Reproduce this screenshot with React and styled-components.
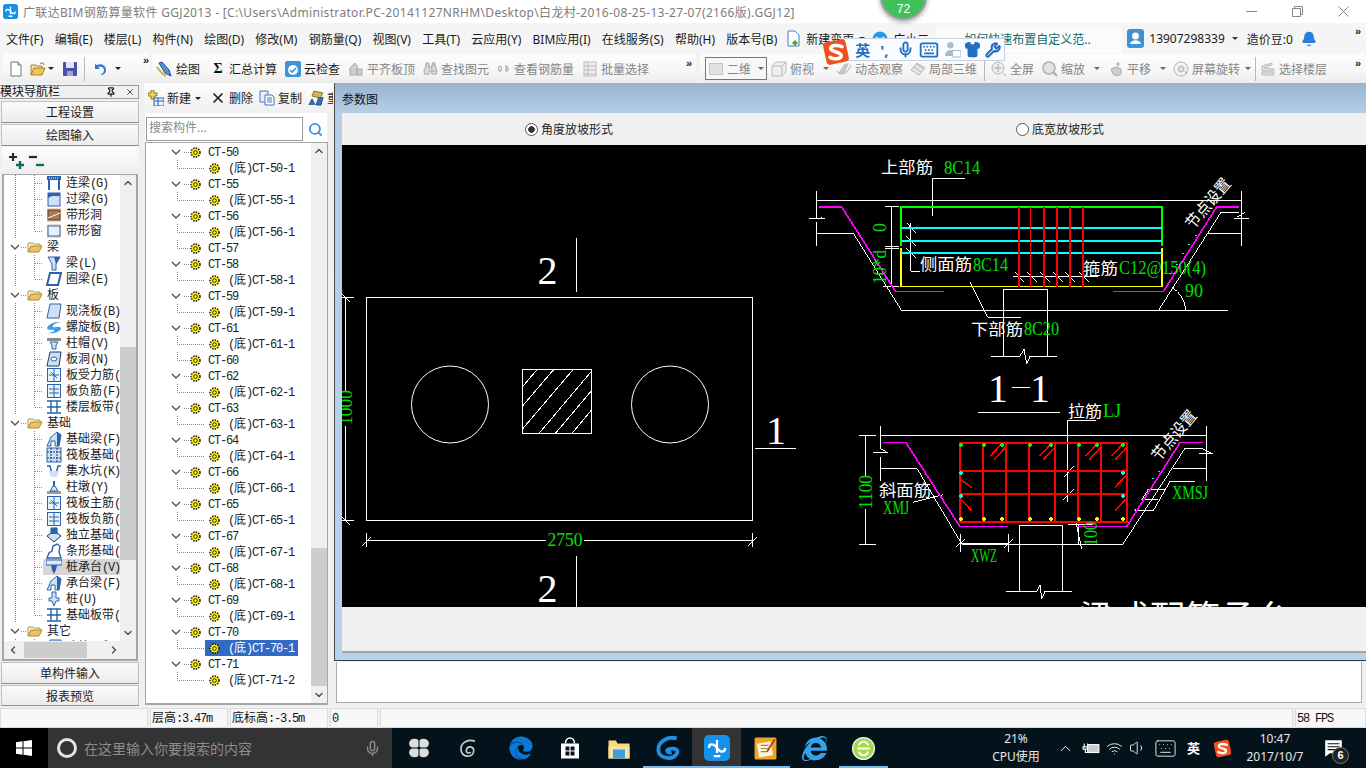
import React from "react";
import styled, { createGlobalStyle } from "styled-components";
import { FaEdge, FaInternetExplorer } from "react-icons/fa";
import { Binoculars, Mic, Search, Bell, Keyboard, Wrench, Shirt, Volume1, Wifi, ChevronUp, ChevronDown, ChevronLeft, ChevronRight, X, Pin } from "lucide-react";

const CJK = `"Noto Sans", "Noto Sans CJK SC", sans-serif`;

const GlobalStyle = createGlobalStyle`
  html, body { margin: 0; padding: 0; background: #f0f0f0; }
  * { box-sizing: border-box; }
  body { font-family: ${CJK}; font-size: 12px; color: #1c1c1c; }
`;

const Page = styled.div`
  position: relative;
  width: 1366px;
  height: 768px;
  overflow: hidden;
  display: flex;
  flex-direction: column;
  background: #f0f0f0;
`;

/* title bar */
const TitleBar = styled.div`
  height: 23px;
  background: #fff;
  display: flex;
  align-items: center;
  padding-left: 3px;
`;
const TitleText = styled.span`
  margin-left: 5px;
  font-size: 12px;
  color: #7d7d7d;
  white-space: nowrap;
  letter-spacing: 0.33px;
`;
const WinButtons = styled.div`
  margin-left: auto;
  display: flex;
  width: 138px;
  height: 23px;
`;
const WinButton = styled.div`
  width: 46px;
  display: flex;
  align-items: center;
  justify-content: center;
`;

/* menu */
const MenuBar = styled.div`
  height: 31px;
  background: #f5f5f5;
  display: flex;
  align-items: center;
  padding-left: 6px;
  white-space: nowrap;
`;
const MenuItem = styled.span`
  margin-right: ${(p) => p.$mr ?? 11.25}px;
  font-size: 12px;
  color: #1c1c1c;
`;
const NewsTab = styled.div`
  width: 186px;
  height: 26px;
  margin: 2px 5px 0 0;
  border-radius: 3px 3px 0 0;
  background: #fbfbfb;
  color: #0c6b6b;
  padding-left: 28px;
  line-height: 25px;
  font-size: 12px;
`;
const MenuIcon = styled.span`
  display: inline-flex;
  margin-right: ${(p) => p.$mr ?? 5}px;
`;
const Caret = styled.span`
  display: inline-block;
  width: 0;
  height: 0;
  border-left: 3px solid transparent;
  border-right: 3px solid transparent;
  border-top: 3px solid ${(p) => p.$c ?? "#333"};
  margin-left: ${(p) => p.$ml ?? 5}px;
  margin-right: ${(p) => p.$mr ?? 0}px;
`;
const More = styled.span`
  font: bold 11px "Liberation Sans", sans-serif;
  color: #222;
  align-self: flex-start;
  margin-top: ${(p) => p.$mt ?? 2}px;
  margin-left: ${(p) => p.$ml ?? 0}px;
`;
const FloatMore = styled(More)`
  position: absolute;
  top: 3px;
  left: ${(p) => p.$x}px;
  margin: 0;
`;

/* toolbars */
const ToolRow = styled.div`
  height: 29px;
  display: flex;
  background: #f2f2f2;
`;
const Band = styled.div`
  width: ${(p) => p.$w}px;
  margin-left: ${(p) => p.$ml ?? 0}px;
  padding-left: ${(p) => p.$pl ?? 4}px;
  display: flex;
  align-items: center;
  border-radius: 4px 4px 0 0;
  background: linear-gradient(#fdfdfd, #f6f6f6 60%, #ececec);
  white-space: nowrap;
  position: relative;
`;
const ToolBtn = styled.div`
  display: flex;
  align-items: center;
  gap: 3px;
  margin-left: ${(p) => p.$ml ?? 8}px;
  font-size: 12px;
  color: ${(p) => (p.$dim ? "#858585" : "#1c1c1c")};
`;
const ToolSep = styled.div`
  width: 1px;
  height: 24px;
  background: #b8b8b8;
  margin: 0 ${(p) => p.$r ?? 6}px 0 ${(p) => p.$l ?? 6}px;
`;
const Combo = styled.div`
  width: 62px;
  height: 23px;
  margin-left: 5px;
  border: 1px solid #777;
  background: #f7f7f7;
  display: flex;
  align-items: center;
  padding-left: 3px;
  color: #858585;
`;
const ComboSwatch = styled.span`
  width: 14px;
  height: 12px;
  margin-right: 4px;
  background: #e2e2e2;
  border: 1px solid #c6c6c6;
`;
const Sigma = styled.span`
  width: 16px;
  text-align: center;
  font: bold 14px "Liberation Serif", serif;
  color: #111;
`;

/* body */
const Body = styled.div`
  flex: 1;
  display: flex;
  min-height: 0;
`;
const LeftPanel = styled.div`
  width: 139px;
  padding: 2px 0 1px;
  display: flex;
  flex-direction: column;
`;
const NavHeader = styled.div`
  height: 14px;
  display: flex;
  align-items: center;
  border: 1px solid #9c9c9c;
  border-left: 0;
  font-size: 12px;
  line-height: 12px;
  color: #111;
  margin-bottom: 2px;
`;
const NavTool = styled.span`
  display: inline-flex;
  margin-left: ${(p) => p.$ml}px;
`;
const NavButton = styled.div`
  height: ${(p) => p.$h ?? 22}px;
  margin: 0 0 1px 1px;
  display: flex;
  align-items: center;
  justify-content: center;
  border: 1px solid #c0c0c0;
  border-bottom-color: #8e8e8e;
  background: linear-gradient(#fafafa, #ececec);
  font-size: 12px;
  color: #1c1c1c;
`;
const ExpandBar = styled.div`
  height: 27px;
  margin-left: 2px;
  display: flex;
  align-items: center;
  padding-left: 4px;
  background: linear-gradient(#fdfdfd, #eeeeee);
`;
const TreeFrame = styled.div`
  flex: 1;
  margin: 0 1px 1px 2px;
  border: 2px solid #a6a6a6;
  border-top-width: 1px;
  display: flex;
  flex-direction: column;
  background: #fff;
  min-height: 0;
`;
const TreeRowWrap = styled.div`
  flex: 1;
  display: flex;
  min-height: 0;
`;
const TreeList = styled.div`
  flex: 1;
  overflow: hidden;
  padding-top: ${(p) => p.$pt ?? 0}px;
`;
const TreeRow = styled.div`
  height: 16px;
  display: flex;
  align-items: center;
  white-space: nowrap;
  font-size: 12px;
  line-height: 16px;
  color: #1c1c1c;
`;
const LeafCell = styled.span`
  display: flex;
  align-items: center;
  height: 16px;
  padding-left: 3px;
  background: ${(p) => (p.$on ? "#d6d6d6" : "transparent")};
`;
const Guide = styled.svg`
  flex: none;
  display: block;
`;
const Mono = styled.span`
  font: 12px "Liberation Mono", monospace;
  letter-spacing: -1.2px;
`;
const TreeCode = styled(Mono)`
  padding-top: 1px;
`;
const RowIcon = styled.span`
  display: inline-flex;
  flex: none;
  margin-right: ${(p) => p.$mr ?? 4}px;
`;
const Clip = styled.span`
  width: ${(p) => p.$w}px;
  overflow: hidden;
  flex: none;
`;
const VScroll = styled.div`
  width: ${(p) => p.$w ?? 16}px;
  flex: none;
  background: #f0f0f0;
  display: flex;
  flex-direction: column;
`;
const ScrollEnd = styled.div`
  height: 16px;
  flex: none;
  display: flex;
  align-items: center;
  justify-content: center;
  color: #555;
`;
const ScrollGap = styled.div`
  height: ${(p) => p.$h}px;
  flex: ${(p) => (p.$h ? "none" : 1)};
`;
const ScrollThumb = styled.div`
  height: ${(p) => p.$h}px;
  flex: none;
  background: #cdcdcd;
`;
const HScroll = styled.div`
  height: 18px;
  flex: none;
  display: flex;
  align-items: center;
  padding-left: 3px;
  background: #f0f0f0;
  color: #555;
`;
const HThumb = styled.div`
  width: 63px;
  height: 16px;
  background: #cdcdcd;
  margin: 0 21px 0 5px;
`;

const MiddlePanel = styled.div`
  width: 189px;
  margin-left: 6px;
  display: flex;
  flex-direction: column;
`;
const MidTools = styled.div`
  height: 30px;
  width: 189px;
  margin-left: -1px;
  padding-left: 4px;
  display: flex;
  align-items: center;
  overflow: hidden;
  white-space: nowrap;
  background: linear-gradient(#fdfdfd, #efefef);
`;
const SearchRow = styled.div`
  height: 29px;
  width: 182px;
  padding-top: 4px;
  display: flex;
  background: #fff;
`;
const SearchBox = styled.div`
  width: 157px;
  height: 24px;
  margin-left: 1px;
  border: 1px solid #9a9a9a;
  padding-left: 2px;
  line-height: 20px;
  font-size: 12px;
  color: #8a8a8a;
  background: #fff;
`;
const SearchBtn = styled.div`
  flex: 1;
  display: flex;
  align-items: center;
  justify-content: center;
  color: #3d92dd;
`;
const MidFrame = styled.div`
  width: 183px;
  flex: 1;
  margin-bottom: 3px;
  border: 1px solid #a6a6a6;
  border-bottom-width: 2px;
  background: #fff;
  display: flex;
  min-height: 0;
`;
const Selected = styled.span`
  width: 93px;
  height: 16px;
  display: flex;
  align-items: center;
  padding-left: 4px;
  background: ${(p) => (p.$on ? "#316ac5" : "transparent")};
  color: ${(p) => (p.$on ? "#fff" : "#1c1c1c")};
`;

/* right */
const RightPanel = styled.div`
  flex: 1;
  display: flex;
  flex-direction: column;
  min-width: 0;
`;
const ParamWindow = styled.div`
  height: 578px;
  padding: 0 0 7px 7px;
  border-left: 1px solid #4a4a4a;
  border-bottom: 1px solid #2f3f3f;
  background: linear-gradient(#9ab4d0, #b6cee7 30px, #b5d2ee);
  display: flex;
  flex-direction: column;
`;
const ParamTitle = styled.div`
  height: 30px;
  padding-top: 9px;
  font-size: 12px;
  line-height: 16px;
  color: #111;
`;
const OptionBar = styled.div`
  height: 33px;
  display: flex;
  align-items: center;
  background: #f0f0f0;
  font-size: 12px;
`;
const RadioLabel = styled.label`
  display: flex;
  align-items: center;
  gap: 3px;
  margin-left: ${(p) => p.$ml}px;
`;
const RadioDot = styled.span`
  width: 13px;
  height: 13px;
  border-radius: 50%;
  border: 1px solid #555;
  background: ${(p) => (p.$on ? "radial-gradient(circle, #333 0 3px, #fff 3.6px)" : "#fff")};
`;
const Cad = styled.svg`
  display: block;
  width: 1024px;
  height: 462px;
  background: #000;
  flex: none;
`;
const ParamFoot = styled.div`
  height: 46px;
  background: #f0f0f0;
  border-bottom: 2px solid #a2a2a2;
`;
const NotePanel = styled.div`
  width: 1026px;
  height: 41px;
  margin: 1px 0 0 2px;
  background: #fff;
  border: 1px solid #adadad;
  border-top: 0;
`;

/* status + taskbar */
const StatusBar = styled.div`
  height: 20px;
  display: flex;
  gap: 2px;
  background: #f0f0f0;
`;
const StatusCell = styled.div`
  width: ${(p) => p.$w}px;
  background: #f7f7f7;
  border: 1px solid #dcdcdc;
  padding-left: 1px;
  line-height: 18px;
  font-size: 12px;
  color: #111;
  white-space: nowrap;
`;
const Taskbar = styled.div`
  height: 40px;
  display: flex;
  background: #04131b;
`;
const StartBtn = styled.div`
  width: 48px;
  background: #000;
  display: flex;
  align-items: center;
  justify-content: center;
`;
const SearchPill = styled.div`
  width: 344px;
  margin-right: 2px;
  background: #333;
  display: flex;
  align-items: center;
  padding-left: 9px;
  color: #8d8d8d;
  font-size: 14px;
`;
const CortanaRing = styled.span`
  width: 20px;
  height: 20px;
  border: 3px solid #e4e4e4;
  border-radius: 50%;
  margin-right: 7px;
`;
const MicSlot = styled.span`
  display: inline-flex;
  margin-left: 112px;
`;
const TaskIcon = styled.div`
  width: 49px;
  height: 40px;
  margin-left: ${(p) => p.$ml ?? 0}px;
  display: flex;
  align-items: center;
  justify-content: center;
  background: ${(p) => (p.$active ? "#333" : "transparent")};
  border-bottom: 2px solid ${(p) => (p.$open ? "#76b9ed" : "transparent")};
  padding-top: 2px;
`;
const Tray = styled.div`
  margin-left: auto;
  display: flex;
  color: #e8e8e8;
`;
const TrayCell = styled.div`
  width: ${(p) => p.$w}px;
  margin-left: ${(p) => p.$ml ?? 0}px;
  padding-right: ${(p) => p.$pr ?? 0}px;
  position: relative;
  display: flex;
  flex-direction: column;
  align-items: center;
  justify-content: center;
  font-size: 12px;
  line-height: 18px;
  white-space: nowrap;
`;
const ImeGlyph = styled.span`
  font-size: 13px;
  font-weight: 700;
  color: #fff;
`;
const NoteBadge = styled.span`
  position: absolute;
  left: 22px;
  top: 19px;
  width: 17px;
  height: 17px;
  border-radius: 50%;
  background: #222;
  border: 1px solid #777;
  color: #fff;
  font: bold 11px/15px "Liberation Sans", sans-serif;
  text-align: center;
`;

/* overlays */
const SpeedBall = styled.div`
  position: absolute;
  left: 880px;
  top: -27px;
  width: 47px;
  height: 47px;
  border-radius: 50%;
  background: #3fc15a;
  border: 2px solid #9d9d9d;
  box-shadow: 0 2px 5px rgba(0, 0, 0, 0.35);
  color: #fff;
  font: 12px "Liberation Sans", sans-serif;
  text-align: center;
  padding-top: 27px;
`;
const ImeBar = styled.div`
  position: absolute;
  left: 843px;
  top: 38px;
  width: 162px;
  height: 23px;
  background: #fafcff;
  border: 1px solid #c6d4e4;
  display: flex;
  align-items: center;
  color: #1e6fc4;
  padding-left: 9px;
`;
const ImeSlot = styled.span`
  width: ${(p) => p.$w ?? 22}px;
  display: flex;
  justify-content: center;
  font-size: 15px;
  font-weight: 700;
  color: ${(p) => p.$c ?? "#1e6fc4"};
`;
const ImeLogo = styled.div`
  position: absolute;
  left: 822px;
  top: 38px;
`;

/* mix of bitmap-like latin and cjk, the old app draws labels this way */
const mixed = (text) =>
  text.split(/([\x20-\x7e]+)/).map((part, i) =>
    /[\x20-\x7e]/.test(part) ? <Mono key={i}>{part}</Mono> : part
  );

/* drawings */
const Svg = ({ s = 16, w, h, children, vb }) => (
  <svg width={w ?? s} height={h ?? s} viewBox={vb ?? "0 0 16 16"} style={{ display: "block" }}>
    {children}
  </svg>
);

const BL = "#2a62b0", LB = "#cfe0f5", DK = "#17386e";
const treeArt = {
  lian: <><rect x="1" y="1" width="14" height="4" fill={BL} /><path d="M3 5v10M13 5v10" stroke={BL} strokeWidth="2" /><path d="M3 3h10" stroke="#fff" strokeDasharray="1 1" /></>,
  guo: <><rect x="2" y="2" width="12" height="13" fill={LB} stroke={BL} /><path d="M2 2h12v3H6l-4 2z" fill={BL} /></>,
  hole: <><rect x="1" y="1" width="14" height="14" fill="#f6d6c8" /><rect x="2" y="3" width="12" height="10" fill="#a6794f" stroke="#5f3b1b" /><path d="M2 11l12-5" stroke="#fff" /></>,
  win: <><rect x="1" y="1" width="14" height="14" fill="#f6d6c8" /><rect x="2" y="3" width="12" height="10" fill="#e8f0fb" stroke={BL} /></>,
  beam: <><path d="M2 2h12L10 9v6H6V9z" fill={LB} stroke={BL} /><path d="M8 2l6 0-4 7" fill={BL} /></>,
  ring: <><path d="M4 2h11l-3 12H1z" fill="#fff" stroke={BL} strokeWidth="2" /></>,
  slab: <><path d="M4 1h11l-2 14H1z" fill={LB} stroke={BL} /></>,
  spiral: <><path d="M1 9c3-6 10-6 14-6-6 1-9 3-8 5 2 1 7-1 8 1 0 4-8 6-14 5 4 0 8-2 7-3-2-1-6 1-7-2z" fill="#3d9be8" /></>,
  cap: <><rect x="1" y="3" width="14" height="3" fill="#8a8a8a" /><path d="M4 7h8l-2 3v4H6v-4z" fill={LB} stroke={BL} /></>,
  shole: <><path d="M4 1h11l-2 14H1z" fill={LB} stroke={DK} /><ellipse cx="8" cy="8" rx="3" ry="2" fill="#fff" stroke={BL} /></>,
  bar: <><rect x="1.5" y="1.5" width="13" height="13" fill="#eaf2fc" stroke={BL} /><path d="M8 2v12M3 8h10M5 5l6 6" stroke={BL} /></>,
  neg: <><rect x="1.5" y="1.5" width="13" height="13" fill="#eaf2fc" stroke={BL} /><path d="M8 2v12M3 6h10M3 10h10" stroke={BL} /></>,
  band: <><path d="M1 2h14M1 14h14M5 2v12M11 2v12M1 8h14" stroke={BL} strokeWidth="1.4" fill="none" /></>,
  fbeam: <><path d="M1 15l4-9 6-5 4 3-2 11H9v-5H5v5z" fill={LB} stroke={BL} /><path d="M11 1l4 3-2 11H11z" fill={BL} /></>,
  raft: <><rect x="1" y="1" width="14" height="14" fill={LB} stroke={BL} /><path d="M5 1v14M11 1v14M1 5h14M1 11h14" stroke={DK} strokeDasharray="2 1" /></>,
  pit: <><path d="M1 3h3l2 8h4l2-8h3" fill="none" stroke={BL} strokeWidth="1.5" /><path d="M3 8h10l-2 6H5z" fill={LB} /></>,
  pier: <><rect x="1" y="12" width="14" height="3" fill="#9a9a9a" /><path d="M4 12l3-5h2l3 5z" fill={LB} stroke={BL} /><rect x="7" y="2" width="2" height="5" fill={BL} /></>,
  ind: <><path d="M1 9l7 6 7-6-4-3V1H5v5z" fill={LB} stroke={DK} /><path d="M5 1h6v6H5z" fill={BL} /></>,
  strip: <><path d="M1 15l2-5 3-2 1-5 4-2 3 2-1 6 2 6z" fill="#fff" stroke={BL} strokeWidth="1.4" /></>,
  pile: <><rect x="0" y="1" width="16" height="5" fill="#dfe8f3" stroke={BL} /><path d="M5 6h6l-1 5-2 4-2-4z" fill={BL} /></>,
  zhuang: <><path d="M6 1h4v6h3v3h-3l-2 5-2-5H3V7h3z" fill={LB} stroke={BL} /></>,
};

const leftTree = [
  ["连梁(G)", "lian"], ["过梁(G)", "guo"], ["带形洞", "hole"], ["带形窗", "win", 1],
  ["梁"], ["梁(L)", "beam"], ["圈梁(E)", "ring", 1],
  ["板"], ["现浇板(B)", "slab"], ["螺旋板(B)", "spiral"], ["柱帽(V)", "cap"], ["板洞(N)", "shole"], ["板受力筋(", "bar"], ["板负筋(F)", "neg"], ["楼层板带(", "band", 1],
  ["基础"], ["基础梁(F)", "fbeam"], ["筏板基础(", "raft"], ["集水坑(K)", "pit"], ["柱墩(Y)", "pier"], ["筏板主筋(", "bar"], ["筏板负筋(", "neg"], ["独立基础(", "ind"], ["条形基础(", "strip"], ["桩承台(V)", "pile", 0, 1], ["承台梁(F)", "fbeam"], ["桩(U)", "zhuang"], ["基础板带(", "band", 1],
  ["其它"], ["建筑面积", "slab"],
];

const Dots = ({ d }) => <path d={d} stroke="#8a8a8a" strokeDasharray="1 1" fill="none" />;
const Chevron = ({ x }) => <path d={`M${x - 4} 6l4 4 4-4`} stroke="#555" strokeWidth="1.4" fill="none" />;

const Folder = () => (
  <Svg s={16}>
    <path d="M1 13V4h5l1 1h6v2" fill="#fff3c9" stroke="#a99a6a" />
    <path d="M1 13l3-6h11l-3 6z" fill="#f2c25a" stroke="#b08a2e" />
  </Svg>
);

const LeftTreeRow = ({ label, icon, last, on }) =>
  icon ? (
    <TreeRow>
      <Guide width="39" height="16" viewBox="4 0 39 16">
        <Dots d="M15.5 0v16" />
        <Dots d={`M34.5 0v${last ? 8.5 : 16}M35 8.5h8`} />
      </Guide>
      <LeafCell $on={on}>
        <RowIcon $mr={4}><Svg>{treeArt[icon]}</Svg></RowIcon>
        <Clip $w={54}>{mixed(label)}</Clip>
      </LeafCell>
    </TreeRow>
  ) : (
    <TreeRow>
      <Guide width="23" height="16" viewBox="4 0 23 16">
        <Chevron x={15} />
        <Dots d="M21 8.5h5" />
      </Guide>
      <RowIcon $mr={4}><Folder /></RowIcon>
      {label}
    </TreeRow>
  );

const Gear = () => (
  <svg width="11" height="11" viewBox="0 0 11 11" style={{ display: "block" }}>
    <circle cx="5.5" cy="5.5" r="4.5" fill="#ffee00" stroke="#1a1a1a" strokeWidth="1.5" strokeDasharray="1.5 1.1" />
    <circle cx="5.5" cy="5.5" r="1.8" fill="#ffff40" stroke="#222" strokeWidth="1" />
  </svg>
);

const ct = [
  ["50", "1"], ["55", "1"], ["56", "1"], ["57"], ["58", "1"], ["59", "1"], ["61", "1"], ["60"], ["62", "1"], ["63", "1"],
  ["64", "1"], ["66", "1"], ["65", "1"], ["67", "1"], ["68", "1"], ["69", "1"], ["70", "1"], ["71", "2"],
];

const MidGroup = ({ id, child }) => (
  <>
    <TreeRow>
      <Guide width="44" height="16" viewBox="146 0 44 16">
        {child ? <Chevron x={176} /> : <Dots d="M177.5 0v8.5h12" />}
        {child && <Dots d="M184 8.5h5" />}
      </Guide>
      <RowIcon $mr={7}><Gear /></RowIcon>
      <TreeCode>CT-{id}</TreeCode>
    </TreeRow>
    {child && (
      <TreeRow>
        <Guide width="59" height="16" viewBox="146 0 59 16">
          <Dots d="M177.5 0v8.5h27.5" />
        </Guide>
        <Selected $on={id === "70"}>
          <RowIcon $mr={8}><Gear /></RowIcon>
          <span>{mixed(`(底)CT-${id}-${child}`)}</span>
        </Selected>
      </TreeRow>
    )}
  </>
);

const ic = {
  doc: <Svg><path d="M3 1h7l3 3v11H3z" fill="#fff" stroke="#777" /><path d="M10 1v3h3" fill="#ddd" stroke="#777" /></Svg>,
  open: <Svg><path d="M1 14V4h5l1 1h5v2" fill="#f7e3a8" stroke="#a5822f" /><path d="M1 14l3-7h11l-3 7z" fill="#eec25d" stroke="#a5822f" /><path d="M10 3c2-2 4-1 4 1" fill="none" stroke="#3b7d2e" /></Svg>,
  save: <Svg><rect x="1" y="1" width="14" height="14" rx="1" fill="#4a4fa8" /><rect x="4" y="1" width="8" height="6" fill="#dfe4f4" /><rect x="5" y="10" width="6" height="5" fill="#9ea6cf" /></Svg>,
  undo: <Svg><path d="M3 3v5h5L6 6c3-1 6 0 6 3s-2 4-4 5c4 0 6-2 6-5 0-4-4-7-9-5z" fill="#3478c8" /></Svg>,
  draw: <Svg w={17} h={16} vb="0 0 17 16"><path d="M3 2l3-1 7 8 2 6-6-3z" fill="#5b8fd6" stroke="#1f4b8e" /><path d="M1 6c2 3 5 7 9 9" stroke="#c9b04a" strokeWidth="2" fill="none" /></Svg>,
  cloud: <Svg><rect x="0" y="0" width="16" height="16" rx="2" fill="#3a93dd" /><circle cx="8" cy="9" r="5" fill="#fff" /><path d="M5 9l2 2 4-4" stroke="#3a93dd" strokeWidth="1.6" fill="none" /></Svg>,
  grey1: <Svg><path d="M2 14V7l5-5 2 3v9zM9 14V8h5v6z" fill="#cfcfcf" stroke="#a8a8a8" /></Svg>,
  find: <Binoculars size={15} color="#b5b5b5" fill="#ddd" />,
  see: <Svg w={14} h={16} vb="0 0 14 16"><path d="M3 5c-2 1-2 5 0 5s2-4 0-5zM9 4v6c3 0 3-4 0-4" stroke="#b0b0b0" strokeWidth="1.3" fill="none" /></Svg>,
  batch: <Svg><rect x="2" y="1" width="12" height="14" fill="#eee" stroke="#bdbdbd" /><path d="M2 5h12M2 9h12M2 13h12M6 1v14" stroke="#bdbdbd" /></Svg>,
  cube: <Svg><path d="M1 5l4-4h10v10l-4 4H1zM1 5h10v10M11 5l4-4" fill="#eeeeee" stroke="#bdbdbd" /></Svg>,
  orbit: <Svg><path d="M2 13l6-10 5-1-4 10z" fill="#c8c8c8" /><path d="M1 10c3 5 10 4 14-6" stroke="#a9a9a9" fill="none" /></Svg>,
  local: <Svg><path d="M1 9l6-7 8 5-6 7z" fill="#e6e6e6" stroke="#b5b5b5" /><path d="M4 6l7 5M7 3l6 5" stroke="#b5b5b5" /></Svg>,
  full: <Svg><circle cx="7" cy="7" r="6" fill="#efefef" stroke="#b5b5b5" /><path d="M7 3v8M3 7h8M12 12l3 3" stroke="#a8a8a8" /></Svg>,
  zoom: <Svg><circle cx="7" cy="7" r="6" fill="#e4e4e4" stroke="#bcbcbc" strokeWidth="2" /><path d="M11 11l4 4" stroke="#a8a8a8" strokeWidth="2" /></Svg>,
  pan: <Svg><path d="M3 8l5-2 5 2v5l-4 2-4-2z" fill="#cfcfcf" stroke="#aaa" /><path d="M10 1v5M8 3h4" stroke="#aaa" /></Svg>,
  rotate: <Svg><circle cx="8" cy="8" r="7" fill="#f2f2f2" stroke="#b3b3b3" /><circle cx="8" cy="8" r="3" fill="#dcdcdc" stroke="#b3b3b3" /><path d="M12 10l2 3" stroke="#999" /></Svg>,
  floors: <Svg><path d="M2 5l10-3v2L4 7l10 1v2H2zM2 11h12v3H2z" fill="#dedede" stroke="#bcbcbc" /></Svg>,
  newbuild: <Svg><path d="M3 0h3v3h3v3H6v3H3V6H0V3h3z" fill="#f4d35e" stroke="#8a7a2a" /><rect x="6" y="8" width="10" height="8" fill="#eaf2fc" stroke={BL} /><path d="M6 11h10M10 8v8" stroke={BL} /></Svg>,
  copy: <Svg><path d="M1 1h8v11H1z" fill="#e6eef9" stroke="#4a73b3" /><path d="M6 5h7l2 2v8H6z" fill="#fff" stroke="#4a73b3" /><path d="M8 8h5M8 10h5M8 12h5" stroke="#4a73b3" /></Svg>,
  rename: <Svg><path d="M6 1l9 2-3 5-8-2z" fill="#d8b24e" stroke="#8a7a2a" /><path d="M1 15l3-6 3 6M11 7l-3 8h5l2-8" fill="#3a6cc0" stroke="#1f4b8e" /></Svg>,
  plusTree: <Svg w={20} h={20} vb="0 0 20 20"><path d="M3 6h8M7 2v8" stroke="#17302c" strokeWidth="2.2" fill="none" /><path d="M10 14h8M14 10v8" stroke="#0d6b5f" strokeWidth="2.4" fill="none" /></Svg>,
  minusTree: <Svg w={20} h={20} vb="0 0 20 20"><path d="M3 6h8" stroke="#17302c" strokeWidth="2.2" /><path d="M10 14h8" stroke="#0d6b5f" strokeWidth="2.4" /></Svg>,
  biaoge: <Svg w={13} h={17} vb="0 0 13 17"><path d="M1 1h7l4 4v11H1z" fill="#fff" stroke="#3a7fd0" /><path d="M5 13l3-3 3 3-3 3z" fill="#57a52a" /></Svg>,
  xiao: <Svg><circle cx="8" cy="8" r="7.5" fill="#2a9be8" /><circle cx="5" cy="8" r="2" fill="#fff" /><circle cx="11" cy="8" r="2" fill="#fff" /></Svg>,
  user: <Svg w={17} h={19} vb="0 0 17 19"><rect width="17" height="19" rx="3" fill="#3f93d2" /><circle cx="8.5" cy="7" r="3.4" fill="#fff" /><path d="M3 15c1-5 10-5 11 0z" fill="#fff" /></Svg>,
};

const band2 = [
  { i: ic.draw, t: "绘图", ml: 0 },
  { i: <Sigma>Σ</Sigma>, t: "汇总计算", ml: 10 },
  { i: ic.cloud, t: "云检查" },
  { i: ic.grey1, t: "平齐板顶", dim: 1 },
  { i: ic.find, t: "查找图元", dim: 1 },
  { i: ic.see, t: "查看钢筋量", dim: 1 },
  { i: ic.batch, t: "批量选择", dim: 1 },
];

const AppIcon = () => (
  <Svg s={15}>
    <rect width="16" height="16" rx="3" fill="#1591ea" />
    <path d="M8 3v8M3 8c0-3 3-3 5 0s5 3 5 0M6 13h4" stroke="#fff" strokeWidth="1.5" fill="none" />
  </Svg>
);

/* CAD drawing, coordinates are the page's own */
const Sec = ({ x, y, s, children, fill = "#fff", family = "Liberation Serif", anchor = "start", rot, w }) => (
  <text
    x={x}
    y={y}
    fontSize={s}
    fill={fill}
    fontFamily={`"${family}", "Noto Sans CJK SC", serif`}
    textAnchor={anchor}
    textLength={w}
    lengthAdjust={w ? "spacingAndGlyphs" : undefined}
    transform={rot ? `rotate(${rot} ${x} ${y})` : undefined}
  >
    {children}
  </text>
);
const Han = (p) => <Sec {...p} family="Noto Sans CJK SC" s={p.s ?? 16} />;
const G = (p) => <Sec fill="#00e000" s={18.5} {...p} />;

const topWhite =
  "M50 125V208M50 218V290M50 253H160L305 485H1285M1075 485L1263 190H1317M1225 253H1325M1325 125V290M50 155H1325" +
  "M28 210H75L62 205M1303 208H1348M1310 205L1335 190M255 174H297M255 292H297M250 413H297M255 298H297M275 174V413" +
  "M397 200V90H495M320 222L348 252M320 262L348 290M320 298L348 328M333 222V367H360" +
  "M640 382H895M643 368L672 398M680 368L710 398M718 368L748 398M757 368L787 398M795 368L825 398M835 368L865 398" +
  "M510 400L563 505H663M610 620V421H743V620M573 622H660L672 600L680 645L690 622H770" +
  "M1115 415A82 82 0 0 1 1157 485";
const botWhite =
  "M122 142V210M122 235V305M122 170H1100M1100 142V305M122 270H232L367 498H847L1035 208H1090M1000 270H1100" +
  "M100 222H145L122 210M1076 225H1120L1090 210" +
  "M78 170V290M78 390V498M57 170H108M57 498H108M415 100H660M682 124H768M682 124V370M670 295L702 262M670 362L702 330" +
  "M218 370L310 347M362 493H505M362 465V520M505 465V520M347 505L375 480M493 505L520 480" +
  "M1065 307H990L940 395H885M975 332H925L905 362H955M683 438H760M717 438V498M708 430L725 510" +
  "M538 637V440H668V637M498 637H590L600 618L605 660L615 637H695";
const pts = (xs, y) => xs.map((x) => `M${x - 6} ${y}h12M${x} ${y - 6}v12`).join("");
const barsX = [364, 433, 487, 571, 634, 718, 772, 850];

const CadDrawing = () => (
  <Cad viewBox="342 146 1024 462">
    <g fill="none" stroke="#fff" strokeWidth="1" shapeRendering="crispEdges">
      <rect x="366.5" y="298.5" width="386" height="223" />
      <rect x="522.5" y="370.5" width="69" height="64" />
      <path d="M522.5 387.7L536.7 371M522.5 407L553.3 371M522.5 430L572.7 371M539.3 434L591.5 372.3M555.7 434L591.5 391.7M572.3 434L591.5 411" />
      <path d="M576.5 239V293M576.5 557V608M755 449.5H796" />
      <path d="M345.5 298V392M345.5 427V522M342 298.5H354M342 521.5H354M342 295L350 303M342 518L350 526" />
      <path d="M366 541.5H546M584 541.5H752M366.5 534V548M752.5 534V548M362 547L371 538M748 547L757 538" />
    </g>
    <circle cx="450" cy="405.5" r="38.5" fill="none" stroke="#fff" />
    <circle cx="670" cy="405.5" r="38.5" fill="none" stroke="#fff" />
    <Sec x={547.5} y={285} s={40} anchor="middle">2</Sec>
    <Sec x={547.5} y={603} s={40} anchor="middle">2</Sec>
    <Sec x={776} y={445} s={40} anchor="middle">1</Sec>
    <G x={565} y={547} anchor="middle" w={35}>2750</G>
    <G x={352} y={426} rot={-90} w={35}>1000</G>

    <g transform="translate(800 150) scale(.33333)" fill="none" shapeRendering="crispEdges">
      <path d={topWhite} stroke="#fff" strokeWidth="3" />
      <path d="M57 174H125L287 428H432M940 428H1090L1250 174H1318" stroke="#f0f" strokeWidth="5" />
      <path d="M303 290V174H1087V290" stroke="#0f0" strokeWidth="5" />
      <path d="M303 298V413H1087V298" stroke="#ff0" strokeWidth="5" />
      <path d="M303 237H1087M303 276H1087M303 312H1087" stroke="#0ff" strokeWidth="5" />
      <path d="M657 174V413M692 174V413M732 174V413M771 174V413M810 174V413M849 174V413" stroke="#f00" strokeWidth="5" />
      <path d="M1107 375h6M1127 348h6M1147 313h6M1165 287h6M1184 259h6" stroke="#0ff" strokeWidth="3" />
    </g>
    <Han x={881} y={174} w={52}>上部筋</Han>
    <G x={944} y={175} w={36}>8C14</G>
    <Han x={920} y={271} w={52}>侧面筋</Han>
    <G x={973} y={272} w={35}>8C14</G>
    <Han x={1083} y={275} w={35}>箍筋</Han>
    <G x={1119} y={275} w={87}>C12@150(4)</G>
    <Han x={971} y={336} w={52}>下部筋</Han>
    <G x={1024} y={336} w={35}>8C20</G>
    <G x={1185} y={298} s={18}>90</G>
    <G x={886} y={233} rot={-90} s={18}>0</G>
    <G x={886} y={285} rot={-90} w={34} s={18}>10*d</G>
    <Han x={1193} y={231} rot={-50} w={60}>节点设置</Han>
    <Sec x={998} y={403} s={40} anchor="middle">1</Sec>
    <Sec x={1021} y={393} s={18} anchor="middle">—</Sec>
    <Sec x={1040} y={403} s={40} anchor="middle">1</Sec>

    <g transform="translate(840 380) scale(.33333)" fill="none" shapeRendering="crispEdges">
      <path d={botWhite} stroke="#fff" strokeWidth="3" />
      <path d="M130 191H198L360 443H503M712 443H860L1020 191H1090" stroke="#f0f" strokeWidth="5" />
      <path d="M360 191H860V428H360zM428 191V428M497 191V428M566 191V428M645 191V428M713 191V428M782 191V428M360 275H860M360 345H860" stroke="#f00" strokeWidth="6" />
      <path d="M450 232L482 198M462 242L497 205M598 232L630 198M610 242L645 205M736 232L768 198M748 242L782 205M814 232L846 198M826 242L860 205M362 302L395 325M362 360L395 395M825 325L858 290M825 395L858 360" stroke="#f00" strokeWidth="5" />
      <path d={pts(barsX, 199)} stroke="#0f0" strokeWidth="6" />
      <path d={pts(barsX, 421)} stroke="#ff0" strokeWidth="6" />
      <path d={pts([364, 850], 283) + pts([364, 850], 352)} stroke="#0ff" strokeWidth="6" />
      <path d="M955 277h6M937 300h6M922 332h6M902 362h6M882 392h6" stroke="#0ff" strokeWidth="3" />
    </g>
    <Han x={1068} y={418} w={34}>拉筋</Han>
    <G x={1103} y={418} w={18}>LJ</G>
    <Han x={879} y={497} w={52}>斜面筋</Han>
    <G x={883} y={515} w={26}>XMJ</G>
    <G x={971} y={563} w={26}>XWZ</G>
    <G x={1172} y={500} w={36}>XMSJ</G>
    <G x={872} y={510} rot={-90} w={34}>1100</G>
    <G x={1097} y={547} rot={-90} w={24}>100</G>
    <Han x={1159} y={463} rot={-50} w={60}>节点设置</Han>
    <Han x={1079} y={632} s={35} w={212}>梁式配筋承台</Han>
  </Cad>
);

const SogouLogo = ({ s = 28 }) => (
  <Svg s={s}>
    <rect x="1.5" y="1.5" width="13" height="13" rx="2" fill="#f0511c" transform="rotate(-12 8 8)" />
    <path d="M11.5 5C9 3.8 5 4 5 6s6 1.8 6 4-4.5 2.4-6.5 1" fill="none" stroke="#fff" strokeWidth="2" strokeLinecap="round" />
  </Svg>
);

const App = () => (
  <Page>
    <GlobalStyle />
    <TitleBar>
      <AppIcon />
      <TitleText>广联达BIM钢筋算量软件 GGJ2013 - [C:\Users\Administrator.PC-20141127NRHM\Desktop\白龙村-2016-08-25-13-27-07(2166版).GGJ12]</TitleText>
      <WinButtons>
        <WinButton><Svg s={11} vb="0 0 11 11"><path d="M0 5.5h11" stroke="#888" /></Svg></WinButton>
        <WinButton><Svg s={11} vb="0 0 11 11"><path d="M.5 2.5h8v8h-8zM2.5 2.5v-2h8v8h-2" fill="none" stroke="#888" /></Svg></WinButton>
        <WinButton><Svg s={11} vb="0 0 11 11"><path d="M.5.5l10 10M10.5.5l-10 10" stroke="#888" /></Svg></WinButton>
      </WinButtons>
    </TitleBar>

    <MenuBar>
      {["文件(F)", "编辑(E)", "楼层(L)", "构件(N)", "绘图(D)", "修改(M)", "钢筋量(Q)", "视图(V)", "工具(T)", "云应用(Y)", "BIM应用(I)", "在线服务(S)", "帮助(H)"].map((m) => (
        <MenuItem key={m}>{m}</MenuItem>
      ))}
      <MenuItem $mr={10}>版本号(B)</MenuItem>
      <MenuIcon $mr={6}>{ic.biaoge}</MenuIcon>
      <MenuItem $mr={0}>新建变更</MenuItem>
      <Caret $ml={5} $mr={7} />
      <MenuIcon $mr={5}>{ic.xiao}</MenuIcon>
      <MenuItem $mr={7}>广小二</MenuItem>
      <NewsTab>如何快速布置自定义范..</NewsTab>
      <MenuIcon>{ic.user}</MenuIcon>
      <MenuItem $mr={0}>13907298339</MenuItem>
      <Caret $ml={7} $mr={9} />
      <MenuItem $mr={8}>造价豆:0</MenuItem>
      <Bell size={16} color="#2a7fdc" fill="#2a7fdc" />
      <More $ml={38}>»</More>
    </MenuBar>

    <ToolRow>
      <Band $w={148} $pl={6} $ml={2}>
        <ToolBtn $ml={0}>{ic.doc}</ToolBtn>
        <ToolBtn $ml={6}>{ic.open}</ToolBtn>
        <Caret $ml={2} $c="#222" />
        <ToolBtn $ml={8}>{ic.save}</ToolBtn>
        <ToolSep $l={6} $r={7} />
        <ToolBtn $ml={0}>{ic.undo}</ToolBtn>
        <Caret $ml={7} $c="#222" />
        <More $mt={0} $ml={22}>»</More>
      </Band>
      <Band $w={544} $ml={2}>
        {band2.map((b) => (
          <ToolBtn key={b.t} $ml={b.ml} $dim={b.dim}>{b.i}{b.t}</ToolBtn>
        ))}
        <FloatMore $x={534}>»</FloatMore>
      </Band>
      <Band $w={666} $ml={4} $pl={0}>
        <Combo><ComboSwatch />二维<Caret $ml={7} $c="#666" /></Combo>
        <ToolBtn $ml={4} $dim>{ic.cube}俯视<Caret $ml={6} $c="#666" /></ToolBtn>
        <ToolBtn $ml={7} $dim>{ic.orbit}动态观察</ToolBtn>
        <ToolBtn $ml={7} $dim>{ic.local}局部三维</ToolBtn>
        <ToolSep $l={7} $r={6} />
        <ToolBtn $ml={0} $dim>{ic.full}全屏</ToolBtn>
        <ToolBtn $ml={8} $dim>{ic.zoom}缩放<Caret $ml={6} $c="#666" /></ToolBtn>
        <ToolBtn $ml={8} $dim>{ic.pan}平移<Caret $ml={6} $c="#666" /></ToolBtn>
        <ToolBtn $ml={7} $dim>{ic.rotate}屏幕旋转<Caret $ml={2} $c="#666" /></ToolBtn>
        <ToolSep $l={4} $r={4} />
        <ToolBtn $ml={0} $dim>{ic.floors}选择楼层</ToolBtn>
        <FloatMore $x={655}>»</FloatMore>
      </Band>
    </ToolRow>

    <Body>
      <LeftPanel>
        <NavHeader>
          模块导航栏
          <NavTool $ml={46}><Pin size={10} color="#222" strokeWidth={3} /></NavTool>
          <NavTool $ml={9}><X size={10} color="#333" /></NavTool>
        </NavHeader>
        <NavButton>工程设置</NavButton>
        <NavButton $h={22}>绘图输入</NavButton>
        <ExpandBar>{ic.plusTree}{ic.minusTree}</ExpandBar>
        <TreeFrame>
          <TreeRowWrap>
            <TreeList>
              {leftTree.map(([label, icon, last, on]) => (
                <LeftTreeRow key={label} label={label} icon={icon} last={last} on={on} />
              ))}
            </TreeList>
            <VScroll>
              <ScrollEnd><ChevronUp size={12} strokeWidth={3} /></ScrollEnd>
              <ScrollGap $h={156} />
              <ScrollThumb $h={213} />
              <ScrollGap />
              <ScrollEnd><ChevronDown size={12} strokeWidth={3} /></ScrollEnd>
            </VScroll>
          </TreeRowWrap>
          <HScroll>
            <ChevronLeft size={12} strokeWidth={3} />
            <HThumb />
            <ChevronRight size={12} strokeWidth={3} />
          </HScroll>
        </TreeFrame>
        <NavButton>单构件输入</NavButton>
        <NavButton $h={21}>报表预览</NavButton>
      </LeftPanel>

      <MiddlePanel>
        <MidTools>
          <ToolBtn $ml={0}>{ic.newbuild}新建<Caret $ml={1} $c="#222" /></ToolBtn>
          <ToolBtn $ml={9}><X size={16} color="#222" strokeWidth={2.6} /></ToolBtn>
          <ToolBtn $ml={3}>删除</ToolBtn>
          <ToolBtn $ml={6}>{ic.copy}复制</ToolBtn>
          <ToolBtn $ml={6}>{ic.rename}重</ToolBtn>
        </MidTools>
        <SearchRow>
          <SearchBox>搜索构件...</SearchBox>
          <SearchBtn><Search size={15} strokeWidth={3} /></SearchBtn>
        </SearchRow>
        <MidFrame>
          <TreeList $pt={1}>
            {ct.map(([id, child]) => <MidGroup key={id} id={id} child={child} />)}
          </TreeList>
          <VScroll>
            <ScrollEnd><ChevronUp size={12} strokeWidth={3} /></ScrollEnd>
            <ScrollGap $h={389} />
            <ScrollThumb $h={138} />
            <ScrollGap />
            <ScrollEnd><ChevronDown size={12} strokeWidth={3} /></ScrollEnd>
          </VScroll>
        </MidFrame>
      </MiddlePanel>

      <RightPanel>
        <ParamWindow>
          <ParamTitle>参数图</ParamTitle>
          <OptionBar>
            <RadioLabel $ml={183}><RadioDot $on />角度放坡形式</RadioLabel>
            <RadioLabel $ml={403}><RadioDot />底宽放坡形式</RadioLabel>
          </OptionBar>
          <CadDrawing />
          <ParamFoot />
        </ParamWindow>
        <NotePanel />
      </RightPanel>
    </Body>

    <StatusBar>
      <StatusCell $w={148} />
      <StatusCell $w={78}>{mixed("层高:3.47m")}</StatusCell>
      <StatusCell $w={98}>{mixed("底标高:-3.5m")}</StatusCell>
      <StatusCell $w={48}>{mixed("0")}</StatusCell>
      <StatusCell $w={913} />
      <StatusCell $w={71}>{mixed("58 FPS")}</StatusCell>
    </StatusBar>

    <Taskbar>
      <StartBtn>
        <Svg s={16}><path d="M0 2.2L6.5 1.3V7.5H0zM7.5 1.2L16 0V7.5H7.5zM0 8.5H6.5V14.7L0 13.8zM7.5 8.5H16V16L7.5 14.8z" fill="#fff" /></Svg>
      </StartBtn>
      <SearchPill>
        <CortanaRing />
        在这里输入你要搜索的内容
        <MicSlot><Mic size={17} color="#8d8d8d" /></MicSlot>
      </SearchPill>
      <TaskIcon>
        <Svg s={24}>
          <g fill="#ddd"><ellipse cx="5" cy="5" rx="3.6" ry="3.2" /><ellipse cx="11" cy="5" rx="3.6" ry="3.2" /><ellipse cx="5" cy="11" rx="3.6" ry="3.2" /><ellipse cx="11" cy="11" rx="3.6" ry="3.2" /></g>
          <path d="M8 1v14M1 8h14" stroke="#04131b" strokeWidth=".7" />
        </Svg>
      </TaskIcon>
      <TaskIcon>
        <Svg s={22}><path d="M13 3C7 1 2 5 3 10s8 5 9 1-4-5-5-2 2 3 3 2" fill="none" stroke="#ccc" strokeWidth="1.2" /></Svg>
      </TaskIcon>
      <TaskIcon $ml={4}><FaEdge size={24} color="#0a78d7" /></TaskIcon>
      <TaskIcon>
        <Svg s={24}>
          <path d="M2 5h12v10H2z" fill="#fff" /><path d="M5 5c0-5 6-5 6 0" fill="none" stroke="#fff" />
          <path d="M5 7h2.6v2.6H5zM8.4 7H11v2.6H8.4zM5 10.4h2.6V13H5zM8.4 10.4H11V13H8.4z" fill="#04131b" />
        </Svg>
      </TaskIcon>
      <TaskIcon>
        <Svg s={24}><path d="M1 3h5l1 2h8v10H1z" fill="#f6d97a" /><rect x="1" y="7" width="14" height="8" fill="#f4e3a1" /><rect x="4" y="9" width="8" height="6" fill="#3aa0dd" /></Svg>
      </TaskIcon>
      <TaskIcon $open>
        <Svg s={28}><path d="M13 2.5C7 1 2 5 2.500 9.500S10 15 12.500 12 12 8 9 8.500 8 11 10 10.500" fill="none" stroke="#1f8fe6" strokeWidth="2.2" /></Svg>
      </TaskIcon>
      <TaskIcon $open $active>
        <Svg s={26}><rect width="16" height="16" rx="3" fill="#1591ea" /><path d="M8 3v8M3 8c0-3 3-3 5 0s5 3 5 0M6 13h4" stroke="#fff" strokeWidth="1.4" fill="none" /></Svg>
      </TaskIcon>
      <TaskIcon $open>
        <Svg s={25}><rect x="1" y="1" width="14" height="14" rx="1" fill="#f3a325" /><rect x="3" y="4" width="9" height="9" fill="#fdf3d8" transform="rotate(-10 8 8)" /><path d="M5 6h5M5 8h5M5 10h4" stroke="#a9834a" strokeWidth=".7" /><path d="M9 10l5-8" stroke="#b03a1a" strokeWidth="1.2" /></Svg>
      </TaskIcon>
      <TaskIcon><FaInternetExplorer size={25} color="#35a1ea" /></TaskIcon>
      <TaskIcon $open>
        <Svg s={25}><circle cx="8" cy="8" r="7" fill="#a4dc46" stroke="#eef" strokeWidth=".8" /><path d="M4 8h8M5 6c1-3 5-3 6 0M5 10c1 3 5 3 6 0" stroke="#fff" strokeWidth="1.2" fill="none" /></Svg>
      </TaskIcon>
      <Tray>
        <TrayCell $w={52}><span>21%</span><span>CPU使用</span></TrayCell>
        <TrayCell $w={26} $ml={10}><ChevronUp size={17} strokeWidth={1.4} /></TrayCell>
        <TrayCell $w={25}>
          <Svg s={18}><path d="M2 4v3M5 4v3M1 7h5v2H1zM3 9v3h3" stroke="#fff" fill="none" /><rect x="5" y="5" width="10" height="7" fill="#ccc" stroke="#fff" /></Svg>
        </TrayCell>
        <TrayCell $w={22}><Wifi size={17} strokeWidth={1.4} /></TrayCell>
        <TrayCell $w={25}><Volume1 size={18} strokeWidth={1.3} /></TrayCell>
        <TrayCell $w={30}><Keyboard size={23} strokeWidth={1} /></TrayCell>
        <TrayCell $w={27}><ImeGlyph>英</ImeGlyph></TrayCell>
        <TrayCell $w={30}><SogouLogo s={19} /></TrayCell>
        <TrayCell $w={70} $ml={3}><span>10:47</span><span>2017/10/7</span></TrayCell>
        <TrayCell $w={56} $pr={10}>
          <Svg s={19}><path d="M1 1h14v11H5l-4 3z" fill="#fff" /><path d="M3 4h10M3 6.500h10M3 9h10" stroke="#04131b" /></Svg>
          <NoteBadge>6</NoteBadge>
        </TrayCell>
      </Tray>
    </Taskbar>

    <SpeedBall>72</SpeedBall>
    <ImeBar>
      <ImeSlot $w={20}>英</ImeSlot>
      <ImeSlot $w={24}>',</ImeSlot>
      <ImeSlot $w={20}><Mic size={17} strokeWidth={2.6} /></ImeSlot>
      <ImeSlot $w={26}><Keyboard size={20} strokeWidth={2.2} /></ImeSlot>
      <ImeSlot $w={22} $c="#b3c1d2">
        <Svg s={17}><circle cx="6" cy="4" r="3" fill="#a9bacd" /><path d="M1 14c0-7 10-7 10 0z" fill="#a9bacd" /><rect x="8" y="9" width="8" height="6" fill="#fff" stroke="#a9bacd" /></Svg>
      </ImeSlot>
      <ImeSlot $w={20}><Shirt size={17} fill="#1e6fc4" /></ImeSlot>
      <ImeSlot $w={22}><Wrench size={16} strokeWidth={3} /></ImeSlot>
    </ImeBar>
    <ImeLogo><SogouLogo /></ImeLogo>
  </Page>
);

export default App;
